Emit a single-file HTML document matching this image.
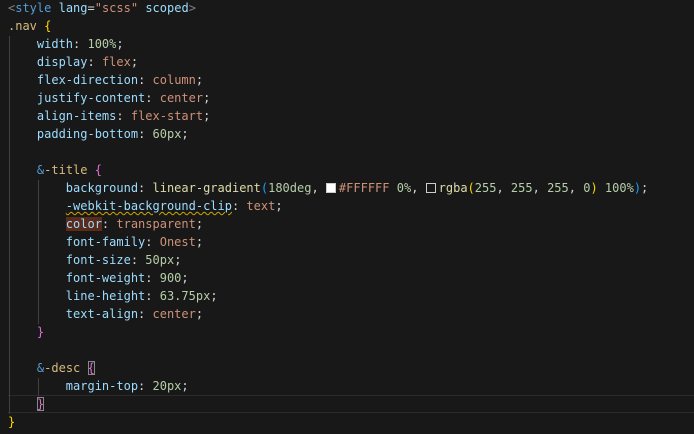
<!DOCTYPE html>
<html><head><style>
body{margin:0;background:#181818;width:694px;height:434px;overflow:hidden;position:relative}
.code{position:absolute;left:8px;top:-1px;font-family:"DejaVu Sans Mono","Liberation Mono",monospace;font-size:12px;line-height:18px;color:#d4d4d4;white-space:pre;letter-spacing:-0.0px}
.g{position:absolute;width:1px;background:#404040}
.p{color:#9cdcfe}.v{color:#ce9178}.n{color:#b5cea8}.s{color:#d7ba7d}.k{color:#569cd6}.t{color:#808080}
.y{color:#ffd700}.m{color:#da70d6}.b{color:#179fff}.d{color:#dcdcaa}
.sq{display:inline-block;width:10px;height:10px;border:1px solid #ccc;vertical-align:-1px;margin-right:3px;box-sizing:border-box}
.bx{outline:1px solid #888;outline-offset:-1px}
.hl{position:absolute;left:8px;right:0;top:395px;height:16px;border-top:1px solid #2a2a2a;border-bottom:1px solid #2a2a2a}
.wv{text-decoration:underline wavy #cca700;text-decoration-thickness:1px}
</style></head><body>
<div class="hl"></div>
<div class="g" style="left:9px;top:36px;height:378px"></div>
<div class="g" style="left:38px;top:180px;height:144px"></div>
<div class="g" style="left:38px;top:378px;height:18px"></div>
<div class="code"><span class="t">&lt;</span><span class="k">style</span> <span class="p">lang</span>=<span class="v">"scss"</span> <span class="p">scoped</span><span class="t">&gt;</span>
<span class="s">.nav</span> <span class="y">{</span>
    <span class="p">width</span>: <span class="n">100%</span>;
    <span class="p">display</span>: <span class="v">flex</span>;
    <span class="p">flex-direction</span>: <span class="v">column</span>;
    <span class="p">justify-content</span>: <span class="v">center</span>;
    <span class="p">align-items</span>: <span class="v">flex-start</span>;
    <span class="p">padding-bottom</span>: <span class="n">60px</span>;

    <span class="k">&amp;</span><span class="s">-title</span> <span class="m">{</span>
        <span class="p">background</span>: <span class="d">linear-gradient</span><span class="b">(</span><span class="n">180deg</span>, <span class="sq" style="background:#fff"></span><span class="v">#FFFFFF</span> <span class="n">0%</span>, <span class="sq"></span><span class="d">rgba</span><span class="y">(</span><span class="n">255</span>, <span class="n">255</span>, <span class="n">255</span>, <span class="n">0</span><span class="y">)</span> <span class="n">100%</span><span class="b">)</span>;
        <span class="p wv">-webkit-background-clip</span>: <span class="v">text</span>;
        <span class="p" style="background:#5a2a1a">color</span>: <span class="v">transparent</span>;
        <span class="p">font-family</span>: <span class="v">Onest</span>;
        <span class="p">font-size</span>: <span class="n">50px</span>;
        <span class="p">font-weight</span>: <span class="n">900</span>;
        <span class="p">line-height</span>: <span class="n">63.75px</span>;
        <span class="p">text-align</span>: <span class="v">center</span>;
    <span class="m">}</span>

    <span class="k">&amp;</span><span class="s">-desc</span> <span class="m bx">{</span>
        <span class="p">margin-top</span>: <span class="n">20px</span>;
    <span class="m bx">}</span>
<span class="y">}</span></div>
</body></html>
